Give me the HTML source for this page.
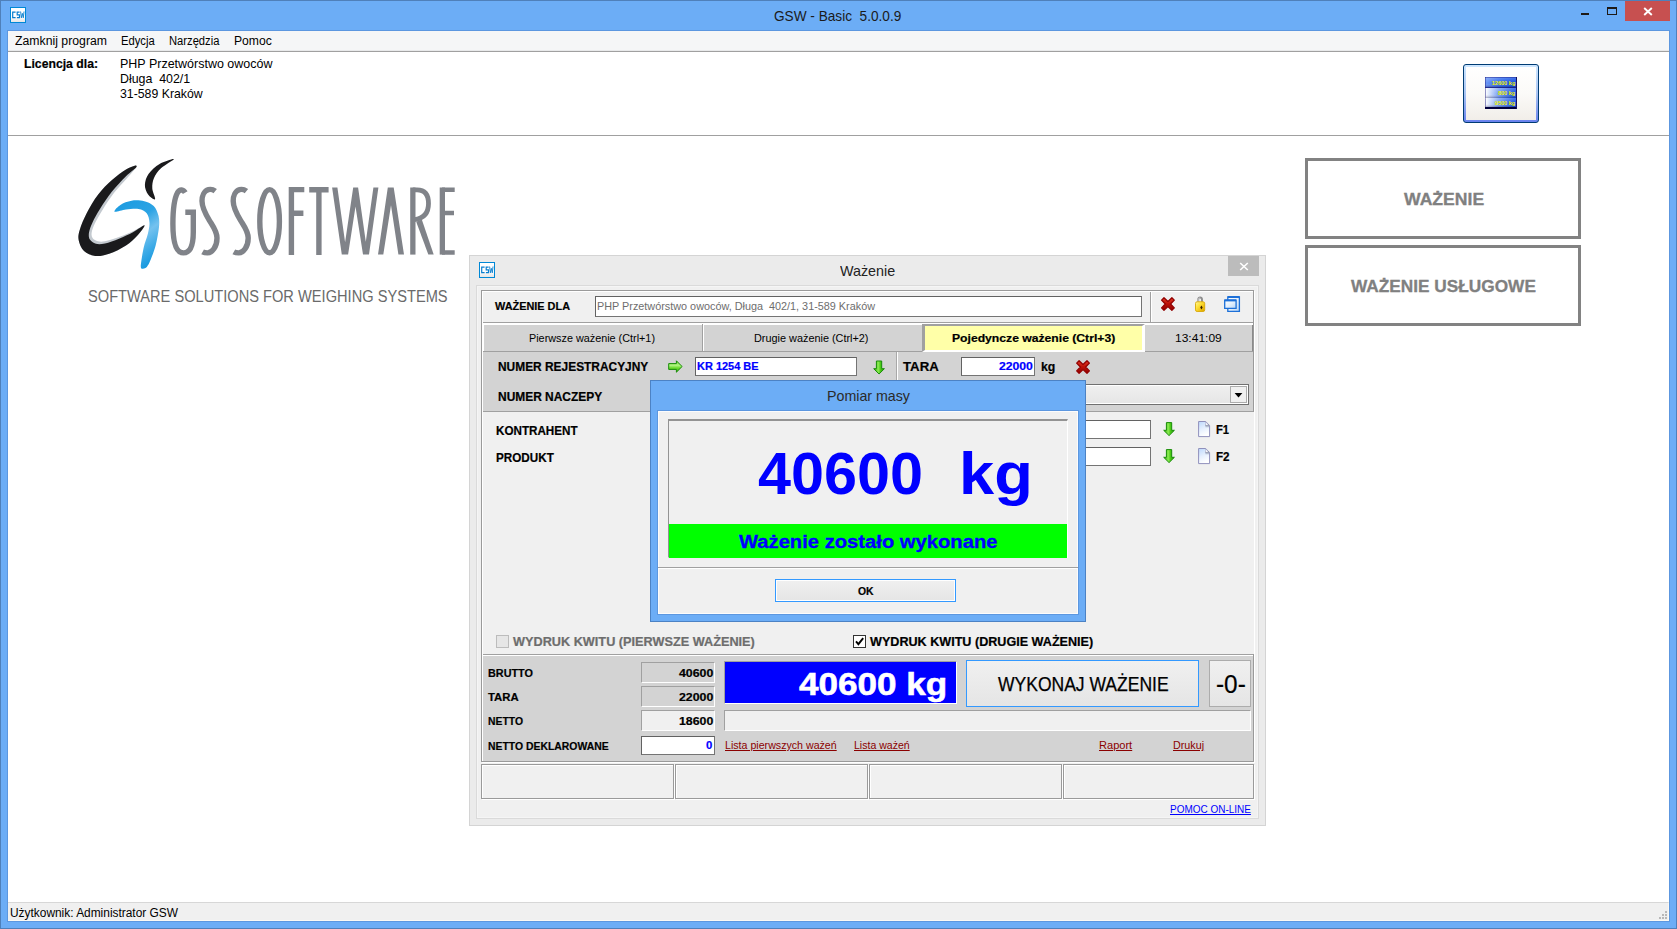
<!DOCTYPE html>
<html>
<head>
<meta charset="utf-8">
<title>GSW - Basic 5.0.0.9</title>
<style>
html,body{margin:0;padding:0;}
body{width:1677px;height:929px;overflow:hidden;position:relative;background:#6cadf6;font-family:"Liberation Sans",sans-serif;}
div,span.t,svg{position:absolute;box-sizing:border-box;}
span.t{white-space:pre;transform-origin:0 50%;display:block;}
.sunk{border:1px solid;border-color:#a0a0a0 #fff #fff #a0a0a0;}
.inp{background:#fff;border:1px solid;border-color:#626262 #747474 #747474 #626262;}
.btn{border:1px solid #acacac;background:linear-gradient(#f0f0f0,#e5e5e5);}
.btnf{border:1px solid #3399ff;background:linear-gradient(#f0f0f0,#e5e5e5);}
.etch{border:1px solid #a0a0a0;box-shadow:inset 1px 1px 0 #fff, 1px 1px 0 #fff;}
</style>
</head>
<body>
<div style="left:0px;top:0px;width:1677px;height:929px;border:1px solid #4f80ba;"></div>
<div style="left:7px;top:30px;width:1663px;height:892px;border:1px solid #5c97e0;"></div>
<div style="left:8px;top:31px;width:1661px;height:890px;background:#fff;"></div>
<div style="left:8px;top:31px;width:1661px;height:21px;background:#f5f6f7;border-bottom:1px solid #a0a0a0;"></div>
<div style="left:8px;top:50px;width:1661px;height:1px;background:#e8e9ea;"></div>
<span class="t" id="t0" style="left:774.30px;top:8.00px;font-size:15px;line-height:15px;color:#1b1b1b;transform:scale(0.9090,1);transform-origin:0 13px;">GSW - Basic &nbsp;5.0.0.9</span>
<svg style="left:10px;top:7px" width="16" height="16" viewBox="0 0 16 16"><defs><linearGradient id="ig1" x1="0" y1="0" x2="0" y2="1"><stop offset="0" stop-color="#fff"/><stop offset="0.6" stop-color="#fdfdfd"/><stop offset="1" stop-color="#e4e4e4"/></linearGradient></defs><rect x="0.5" y="0.5" width="15" height="15" fill="url(#ig1)" stroke="#0088d6"/><g fill="none" stroke="#0a7fcf" stroke-width="1.2"><path d="M5.6 5.1H2.7V10.6H5.6"/><path d="M9.6 5.1H7.2V7.8H9.5V10.6H6.9"/><path d="M10.6 4.5L11.4 10.8L12.4 6.4L13.3 10.8L14 4.5" stroke-width="0.9"/></g></svg>
<div style="left:1581px;top:13px;width:8px;height:2px;background:#1e1a16;"></div>
<div style="left:1607px;top:7px;width:10px;height:8px;border:1px solid #1e1a16;border-top-width:2px;"></div>
<div style="left:1625px;top:1px;width:45px;height:20px;background:#c75050;"></div>
<svg style="left:1643px;top:7px" width="10" height="9" viewBox="0 0 10 9"><path d="M1.2 1L8.8 8M8.8 1L1.2 8" stroke="#fff" stroke-width="1.9" fill="none"/></svg>
<span class="t" id="t1" style="left:15.00px;top:35.00px;font-size:12px;line-height:12px;color:#000;transform:scale(1.0219,1);transform-origin:0 10px;">Zamknij program</span>
<span class="t" id="t2" style="left:120.90px;top:35.00px;font-size:12px;line-height:12px;color:#000;transform:scale(0.9353,1);transform-origin:0 10px;">Edycja</span>
<span class="t" id="t3" style="left:169.30px;top:35.00px;font-size:12px;line-height:12px;color:#000;transform:scale(0.9328,1);transform-origin:0 10px;">Narzędzia</span>
<span class="t" id="t4" style="left:234.00px;top:35.00px;font-size:12px;line-height:12px;color:#000;transform:scale(1.0118,1);transform-origin:0 10px;">Pomoc</span>
<span class="t" id="t5" style="left:24.00px;top:57.00px;font-size:13px;line-height:13px;color:#000;font-weight:bold;-webkit-text-stroke:0.20px;transform:scale(0.9397,1);transform-origin:0 11px;">Licencja dla:</span>
<span class="t" id="t6" style="left:120.00px;top:57.00px;font-size:13px;line-height:13px;color:#000;transform:scale(0.9608,1);transform-origin:0 11px;">PHP Przetwórstwo owoców</span>
<span class="t" id="t7" style="left:120.00px;top:72.00px;font-size:13px;line-height:13px;color:#000;transform:scale(0.9521,1);transform-origin:0 11px;">Długa &nbsp;402/1</span>
<span class="t" id="t8" style="left:120.00px;top:87.00px;font-size:13px;line-height:13px;color:#000;transform:scale(0.9456,1);transform-origin:0 11px;">31-589 Kraków</span>
<div style="left:8px;top:135px;width:1661px;height:1px;background:#a0a0a0;"></div>
<div style="left:8px;top:902px;width:1661px;height:19px;background:#f0f0f0;border-top:1px solid #d7d7d7;border-right:1px solid #fbf9f4;border-bottom:1px solid #fbf9f4;"></div>
<span class="t" id="t9" style="left:10.00px;top:907.00px;font-size:12px;line-height:12px;color:#000;transform:scale(0.9919,1);transform-origin:0 10px;">Użytkownik: Administrator GSW</span>
<div style="left:1665px;top:911px;width:2px;height:2px;background:#b8b8b8;"></div>
<div style="left:1662px;top:914px;width:2px;height:2px;background:#b8b8b8;"></div>
<div style="left:1665px;top:914px;width:2px;height:2px;background:#b8b8b8;"></div>
<div style="left:1659px;top:917px;width:2px;height:2px;background:#b8b8b8;"></div>
<div style="left:1662px;top:917px;width:2px;height:2px;background:#b8b8b8;"></div>
<div style="left:1665px;top:917px;width:2px;height:2px;background:#b8b8b8;"></div>
<svg style="left:70px;top:150px" width="400" height="130" viewBox="70 150 400 130">
<defs>
<linearGradient id="lb" x1="0.1" y1="0" x2="0.6" y2="1"><stop offset="0" stop-color="#1c9be0"/><stop offset="0.4" stop-color="#2ba3e4"/><stop offset="0.62" stop-color="#74c2ef"/><stop offset="0.85" stop-color="#3aa9e6"/><stop offset="1" stop-color="#1c9be0"/></linearGradient>
</defs>
<path d="M134.7 165.7 C133.0 166.0 129.8 167.2 126.0 169.6 C122.2 172.0 116.7 175.9 112.0 180.1 C107.3 184.3 102.2 189.3 98.0 194.8 C93.8 200.3 89.8 207.1 86.8 213.0 C83.8 218.8 81.1 225.2 79.8 229.8 C78.4 234.3 78.0 236.7 78.7 240.3 C79.4 243.8 81.2 248.4 84.0 251.0 C86.7 253.7 91.0 255.5 95.2 255.9 C99.4 256.4 104.1 255.6 109.2 253.8 C114.3 252.1 121.3 248.5 126.0 245.5 C130.6 242.4 134.1 239.0 137.2 235.7 C140.3 232.3 145.2 226.0 144.5 225.3 C143.8 224.6 137.2 229.2 133.0 231.2 C128.7 233.1 123.7 235.4 119.0 237.1 C114.3 238.7 108.5 240.6 105.0 241.3 C101.5 242.0 100.0 241.8 98.0 241.3 C95.9 240.7 93.7 239.6 92.7 238.2 C91.6 236.7 91.3 235.0 91.7 232.6 C92.1 230.1 93.1 227.1 94.9 223.3 C96.7 219.6 99.3 214.9 102.5 209.9 C105.6 204.9 109.8 198.5 113.9 193.1 C118.1 187.7 123.7 182.0 127.4 177.7 C131.1 173.4 134.8 169.4 136.1 167.4 C137.3 165.3 136.3 165.3 134.7 165.7Z" fill="#c3c9cf"/>
<path d="M134.7 165.7 C133.0 166.0 129.8 167.2 126.0 169.6 C122.2 172.0 116.7 175.9 112.0 180.1 C107.3 184.3 102.2 189.3 98.0 194.8 C93.8 200.3 89.8 207.1 86.8 213.0 C83.8 218.8 81.1 225.2 79.8 229.8 C78.4 234.3 78.0 236.7 78.7 240.3 C79.4 243.8 81.2 248.4 84.0 251.0 C86.7 253.7 91.0 255.5 95.2 255.9 C99.4 256.4 104.1 255.6 109.2 253.8 C114.3 252.1 121.3 248.5 126.0 245.5 C130.6 242.4 134.1 239.0 137.2 235.7 C140.3 232.3 145.2 225.9 144.5 225.3 C143.8 224.7 137.2 229.9 133.0 232.2 C128.7 234.4 123.7 236.8 119.0 238.7 C114.3 240.6 108.8 242.7 105.0 243.5 C101.1 244.3 98.4 244.4 95.9 243.8 C93.4 243.1 91.0 241.4 89.9 239.6 C88.7 237.7 88.6 235.4 89.0 232.6 C89.5 229.8 90.6 226.7 92.4 222.8 C94.2 218.8 96.8 214.0 100.1 208.8 C103.4 203.6 107.7 197.0 112.0 191.6 C116.3 186.1 122.0 180.2 126.0 176.2 C130.0 172.1 134.6 169.1 136.1 167.4 C137.5 165.6 136.3 165.3 134.7 165.7Z" fill="#1a1a1c"/>
<path d="M173.8 159.2 C173.6 158.5 163.8 161.6 159.6 164.0 C155.4 166.4 151.1 170.3 148.7 173.8 C146.2 177.3 145.0 181.5 144.9 185.0 C144.8 188.4 146.4 192.1 148.1 194.5 C149.8 196.9 154.4 200.3 155.1 199.3 C155.8 198.3 152.5 192.0 152.3 188.5 C152.1 184.9 152.5 181.4 154.0 178.0 C155.4 174.6 157.7 171.3 161.0 168.2 C164.3 165.1 174.1 159.9 173.8 159.2Z" fill="#1a1a1c"/>
<path d="M114.5 211.7 C113.6 210.9 117.5 206.7 120.4 204.9 C123.2 203.0 127.6 201.3 131.6 200.7 C135.5 200.1 140.5 200.3 144.2 201.2 C147.9 202.1 151.3 203.6 153.7 206.0 C156.1 208.4 157.6 212.3 158.5 215.8 C159.3 219.3 159.5 222.1 159.0 227.0 C158.5 231.9 157.1 239.6 155.7 245.2 C154.2 250.8 151.8 257.0 150.3 260.6 C148.9 264.2 148.0 265.4 147.0 266.7 C145.9 268.0 144.9 268.5 143.9 268.4 C142.9 268.4 140.9 269.9 140.8 266.4 C140.8 263.0 142.5 253.4 143.6 248.0 C144.8 242.6 146.8 238.2 147.8 234.0 C148.8 229.8 149.7 226.2 149.5 222.8 C149.3 219.3 148.5 215.5 146.7 213.3 C144.9 211.0 142.0 209.7 138.6 209.1 C135.1 208.5 130.0 209.2 126.0 209.6 C122.0 210.1 115.4 212.5 114.5 211.7Z" fill="url(#lb)"/>
<g fill="none" stroke="#808389" stroke-width="5.4" stroke-linejoin="miter">
<path d="M185.2 192.6 C183.5 189.6 180 188.6 177.6 192.5 C174 199 172.9 210 172.9 224 C172.9 240 175.5 252.9 183.4 252.9 C191 252.9 193.3 244 193.3 232 V212.3 H185.3"/>
<path id="sS" d="M215.2 191.2 C213 189.4 210 189.2 208.4 189.6 C204 190.8 202 196 202 201 C202 208 205.5 214 209.5 220.6 C213.5 227 217 231.5 217 238 C217 247 212 252.9 207.5 252.9 C205.5 252.9 204 252.6 202.6 251.8"/>
<path transform="translate(31.2 0)" d="M215.2 191.2 C213 189.4 210 189.2 208.4 189.6 C204 190.8 202 196 202 201 C202 208 205.5 214 209.5 220.6 C213.5 227 217 231.5 217 238 C217 247 212 252.9 207.5 252.9 C205.5 252.9 204 252.6 202.6 251.8"/>
<ellipse cx="269.6" cy="221.2" rx="9.8" ry="31.6"/>
<path d="M291.4 255 V189.6 H304.3 M291.4 213.2 H303.4"/>
<path d="M309.2 189.8 H328.6 M318.9 189.8 V255"/>
<path d="M412.85 254.6 V187.5" stroke-width="5.3"/>
<path d="M412.8 189.8 H417 C425.6 189.8 428.5 195.5 428.5 203.5 C428.5 213 424.5 218.4 414.5 219.6" stroke-width="4.8"/>
<path d="M442.35 187.5 V254.6" stroke-width="5.3"/>
<path d="M442 189.7 H454.7 M442 213 H454 M442 252.4 H454.7" stroke-width="4.5"/>
</g>
<g fill="#808389">
<path d="M332.1 187.5 L337.4 187.5 L345.1 242.2 L353.2 187.5 L358.1 187.5 L365.8 241.8 L373.4 187.5 L378.4 187.5 L369 254.6 L363 254.6 L355.5 206.5 L348.1 254.6 L341.8 254.6 Z"/>
<path d="M387.8 187.5 L393.7 187.5 L404 254.6 L398.4 254.6 L391 205.2 L383.3 254.6 L378 254.6 Z"/>
<path d="M416.2 221.8 L421.8 219.6 L433.7 254.6 L428.3 254.6 Z"/>
</g>
</svg>
<span class="t" id="t10" style="left:87.80px;top:289.00px;font-size:16px;line-height:16px;color:#6a6a6a;transform:scale(0.9145,1);transform-origin:0 13px;">SOFTWARE SOLUTIONS FOR WEIGHING SYSTEMS</span>
<div style="left:1463px;top:64px;width:76px;height:59px;border:1px solid #003c74;border-radius:3px;background:linear-gradient(#cee7ff,#a9c4f2 50%,#6982ee);"></div>
<div style="left:1466px;top:67px;width:70px;height:53px;background:linear-gradient(#ffffff 0%,#fbfaf8 50%,#f1eee9 100%);"></div>
<svg style="left:1485px;top:77px" width="32" height="32" viewBox="0 0 32 32"><defs>
<linearGradient id="sg1" x1="0" y1="0" x2="1" y2="0"><stop offset="0" stop-color="#6b95f4"/><stop offset="0.5" stop-color="#2a66ee"/><stop offset="1" stop-color="#0a48e0"/></linearGradient>
<linearGradient id="sg2" x1="0" y1="0" x2="1" y2="0"><stop offset="0" stop-color="#ffffff"/><stop offset="0.45" stop-color="#6f9af4"/><stop offset="1" stop-color="#0a48e0"/></linearGradient>
<linearGradient id="sgv" x1="0" y1="0" x2="0" y2="1"><stop offset="0" stop-color="#fff" stop-opacity="0.25"/><stop offset="0.6" stop-color="#fff" stop-opacity="0"/><stop offset="1" stop-color="#000040" stop-opacity="0.35"/></linearGradient></defs>
<rect x="0" y="0" width="32" height="32" fill="#1a1a80"/>
<rect x="0.5" y="0.5" width="30.5" height="9.7" fill="url(#sg1)"/><rect x="0.5" y="11" width="30.5" height="10.2" fill="url(#sg2)"/><rect x="0.5" y="21" width="30.5" height="9.2" fill="url(#sg2)"/>
<rect x="0.5" y="0.5" width="30.5" height="9.7" fill="url(#sgv)"/><rect x="0.5" y="11" width="30.5" height="10" fill="url(#sgv)"/><rect x="0.5" y="21" width="30.5" height="9.2" fill="url(#sgv)"/>
<rect x="0" y="30" width="32" height="2" fill="#00003c"/><rect x="31" y="0" width="1" height="32" fill="#101060"/>
<g fill="#f2f200" font-family="Liberation Sans, sans-serif" font-weight="bold" font-size="5.6" text-anchor="end"><text x="30.3" y="7.8">12600 kg</text><text x="30.3" y="18">800 kg</text><text x="30.3" y="28.2">9500 kg</text></g></svg>
<div style="left:1305px;top:158px;width:276px;height:81px;border:3px solid #828282;background:#fff;"></div>
<span class="t" id="t11" style="left:1403.60px;top:191.00px;font-size:17.33px;line-height:17.33px;color:#808080;font-weight:bold;-webkit-text-stroke:0.31px;transform:scale(1.0158,1);transform-origin:0 14px;">WAŻENIE</span>
<div style="left:1305px;top:245px;width:276px;height:81px;border:3px solid #828282;background:#fff;"></div>
<span class="t" id="t12" style="left:1350.50px;top:278.00px;font-size:17.33px;line-height:17.33px;color:#808080;font-weight:bold;-webkit-text-stroke:0.31px;transform:scale(0.9952,1);transform-origin:0 14px;">WAŻENIE USŁUGOWE</span>
<div style="left:469px;top:255px;width:797px;height:571px;background:#ebebeb;border:1px solid #d4d4d4;"></div>
<div style="left:476px;top:285px;width:783px;height:534px;background:#f0f0f0;border:1px solid #dadada;box-shadow:inset 0 0 0 1px #f5f5f5;"></div>
<svg style="left:479px;top:262px" width="16" height="16" viewBox="0 0 16 16"><defs><linearGradient id="ig2" x1="0" y1="0" x2="0" y2="1"><stop offset="0" stop-color="#fff"/><stop offset="0.6" stop-color="#fdfdfd"/><stop offset="1" stop-color="#e4e4e4"/></linearGradient></defs><rect x="0.5" y="0.5" width="15" height="15" fill="url(#ig2)" stroke="#0088d6"/><g fill="none" stroke="#0a7fcf" stroke-width="1.2"><path d="M5.6 5.1H2.7V10.6H5.6"/><path d="M9.6 5.1H7.2V7.8H9.5V10.6H6.9"/><path d="M10.6 4.5L11.4 10.8L12.4 6.4L13.3 10.8L14 4.5" stroke-width="0.9"/></g></svg>
<span class="t" id="t13" style="left:839.50px;top:263.00px;font-size:15px;line-height:15px;color:#222;transform:scale(0.9548,1);transform-origin:0 13px;">Ważenie</span>
<div style="left:1228px;top:256px;width:31px;height:20px;background:#bcbcbc;"></div>
<svg style="left:1239px;top:262px" width="10" height="9" viewBox="0 0 10 9"><path d="M1.2 1L8.8 8M8.8 1L1.2 8" stroke="#fff" stroke-width="1.6" fill="none"/></svg>
<div style="left:482px;top:291px;width:773px;height:472px;background:#f0f0f0;border:1px solid #fff;"></div>
<div style="left:481px;top:290px;width:773px;height:472px;border:1px solid #9a9a9a;"></div>
<span class="t" id="t14" style="left:495.00px;top:301.00px;font-size:11px;line-height:11px;color:#000;font-weight:bold;-webkit-text-stroke:0.20px;transform:scale(0.9897,1);transform-origin:0 9px;">WAŻENIE DLA</span>
<div class="inp" style="left:595px;top:296px;width:547px;height:21px;"></div>
<span class="t" id="t15" style="left:597.20px;top:301.00px;font-size:11px;line-height:11px;color:#6d6d6d;transform:scale(0.9848,1);transform-origin:0 9px;">PHP Przetwórstwo owoców, Długa &nbsp;402/1, 31-589 Kraków</span>
<svg style="left:1160px;top:296px" width="16" height="16" viewBox="0 0 16 16"><defs><linearGradient id="rx0" x1="0" y1="0" x2="0" y2="1"><stop offset="0" stop-color="#e23c28"/><stop offset="0.45" stop-color="#c0140a"/><stop offset="1" stop-color="#920000"/></linearGradient></defs><path transform="translate(0.7 0.9) scale(0.965 0.95)" d="M3.4 0.9L7.5 4.8L11.6 0.9L14.1 3.4L10.2 7.5L14.1 11.6L11.6 14.1L7.5 10.2L3.4 14.1L0.9 11.6L4.8 7.5L0.9 3.4Z" fill="url(#rx0)" stroke="#920000" stroke-width="1.3" stroke-linejoin="round"/></svg>
<svg style="left:1194px;top:296px" width="13" height="17" viewBox="0 0 13 17"><defs><linearGradient id="lk" x1="0" y1="0" x2="1" y2="1"><stop offset="0" stop-color="#fff6a0"/><stop offset="0.35" stop-color="#ffe440"/><stop offset="0.7" stop-color="#f0c010"/><stop offset="1" stop-color="#d8a000"/></linearGradient></defs>
<path d="M4.2 7.6V3.6C4.2 2.1 5.1 1.5 6.1 1.5C7.1 1.5 8 2.1 8 3.6V7.6" fill="none" stroke="#8e8e8e" stroke-width="1.9"/>
<path d="M4.2 7.6V3.8C4.2 2.5 5.2 2 6.1 2" fill="none" stroke="#dcdcdc" stroke-width="0.8"/>
<rect x="1.5" y="5.8" width="9.2" height="9.7" rx="1.6" fill="url(#lk)" stroke="#d8a808" stroke-width="0.9"/>
<path d="M7.4 9.6L8.7 11.6L7.4 13.5L6.2 11.6Z" fill="#3a2400"/></svg>
<svg style="left:1223px;top:295px" width="18" height="18" viewBox="0 0 18 18"><defs><linearGradient id="wn" x1="0" y1="0" x2="1" y2="1"><stop offset="0" stop-color="#fff"/><stop offset="0.5" stop-color="#e4f0fc"/><stop offset="1" stop-color="#b8d6f6"/></linearGradient></defs>
<path d="M4.8 1.9H16.4V16.3H4.8Z" fill="url(#wn)" stroke="#1d70d8" stroke-width="1.3"/><path d="M4.8 2H16.4" stroke="#1d70d8" stroke-width="2"/>
<path d="M1.7 5.2H13.1V13.4H1.7Z" fill="url(#wn)" stroke="#1d70d8" stroke-width="1.3"/><path d="M1.7 5.4H13.1" stroke="#1d70d8" stroke-width="2"/></svg>
<div style="left:1150px;top:292px;width:1px;height:30px;background:#a0a0a0;"></div>
<div style="left:1151px;top:292px;width:1px;height:30px;background:#fff;"></div>
<div style="left:483px;top:322px;width:770px;height:1px;background:#a0a0a0;"></div>
<div style="left:483px;top:323px;width:770px;height:2px;background:#fff;"></div>
<div style="left:484px;top:325px;width:769px;height:26px;background:#d3d3d3;"></div>
<div style="left:483px;top:325px;width:1px;height:26px;background:#fff;"></div>
<div style="left:1252px;top:325px;width:1px;height:26px;background:#8a8a8a;"></div>
<div style="left:483px;top:351px;width:770px;height:1px;background:#a0a0a0;"></div>
<div style="left:702px;top:324px;width:1px;height:27px;background:#a0a0a0;"></div>
<div style="left:703px;top:325px;width:1px;height:26px;background:#fff;"></div>
<span class="t" id="t16" style="left:529.10px;top:333.00px;font-size:11px;line-height:11px;color:#000;transform:scale(0.9838,1);transform-origin:0 9px;">Pierwsze ważenie (Ctrl+1)</span>
<span class="t" id="t17" style="left:754.40px;top:333.00px;font-size:11px;line-height:11px;color:#000;transform:scale(0.9883,1);transform-origin:0 9px;">Drugie ważenie (Ctrl+2)</span>
<div style="left:922px;top:324px;width:223px;height:28px;background:#ffffa8;border:solid;border-width:2px 3px 2px 3px;border-color:#a0a0a0 #fff #fff #a0a0a0;"></div>
<span class="t" id="t18" style="left:951.80px;top:333.00px;font-size:11px;line-height:11px;color:#000;font-weight:bold;-webkit-text-stroke:0.20px;transform:scale(1.1054,1);transform-origin:0 9px;">Pojedyncze ważenie (Ctrl+3)</span>
<span class="t" id="t19" style="left:1174.70px;top:333.00px;font-size:11px;line-height:11px;color:#000;transform:scale(1.0927,1);transform-origin:0 9px;">13:41:09</span>
<div style="left:483px;top:352px;width:770px;height:59px;background:#d3d3d3;"></div>
<div style="left:483px;top:411px;width:770px;height:1px;background:#a0a0a0;"></div>
<span class="t" id="t20" style="left:497.60px;top:361.00px;font-size:12px;line-height:12px;color:#000;font-weight:bold;-webkit-text-stroke:0.20px;transform:scale(0.9930,1);transform-origin:0 10px;">NUMER REJESTRACYJNY</span>
<span class="t" id="t21" style="left:497.60px;top:391.00px;font-size:12px;line-height:12px;color:#000;font-weight:bold;-webkit-text-stroke:0.20px;transform:scale(0.9955,1);transform-origin:0 10px;">NUMER NACZEPY</span>
<svg style="left:667.5px;top:359.8px" width="15" height="13" viewBox="0 0 15 13"><defs><linearGradient id="ar1" x1="0" y1="0" x2="0" y2="1"><stop offset="0.1" stop-color="#84dc48"/><stop offset="0.4" stop-color="#b0f480"/><stop offset="0.62" stop-color="#6cdc30"/><stop offset="0.95" stop-color="#38b010"/></linearGradient></defs><path d="M0.7 3.6H8.4V0.8L14.1 6.5L8.4 12.2V9.4H0.7Z" fill="url(#ar1)" stroke="#188c08" stroke-width="1" stroke-linejoin="round"/></svg>
<div class="inp" style="left:695px;top:357px;width:162px;height:19px;"></div>
<span class="t" id="t22" style="left:697.40px;top:361.00px;font-size:11px;line-height:11px;color:#0000ff;font-weight:bold;-webkit-text-stroke:0.20px;transform:scale(0.9973,1);transform-origin:0 9px;">KR 1254 BE</span>
<svg style="left:873px;top:360px" width="14" height="16" viewBox="0 0 14 16"><defs><linearGradient id="ad1" x1="0" y1="0" x2="1" y2="0"><stop offset="0.1" stop-color="#3cb410"/><stop offset="0.42" stop-color="#8eec54"/><stop offset="0.62" stop-color="#4ccc18"/><stop offset="0.95" stop-color="#2a9c08"/></linearGradient></defs><path transform="translate(0 0.4)" d="M3.4 0.6V8.3H0.7L6.05 13.6L11.4 8.3H8.7V0.6Z" fill="url(#ad1)" stroke="#188c08" stroke-width="1" stroke-linejoin="round"/></svg>
<div style="left:896px;top:352px;width:1px;height:59px;background:#a8a8a8;"></div>
<div style="left:897px;top:352px;width:1px;height:59px;background:#fff;"></div>
<span class="t" id="t23" style="left:903.20px;top:361.00px;font-size:12px;line-height:12px;color:#000;font-weight:bold;-webkit-text-stroke:0.20px;transform:scale(1.1006,1);transform-origin:0 10px;">TARA</span>
<div class="inp" style="left:961px;top:357px;width:74px;height:19px;"></div>
<span class="t" id="t24" style="left:998.70px;top:361.00px;font-size:11px;line-height:11px;color:#0000ff;font-weight:bold;-webkit-text-stroke:0.20px;transform:scale(1.1081,1);transform-origin:0 9px;">22000</span>
<span class="t" id="t25" style="left:1041.00px;top:361.00px;font-size:12px;line-height:12px;color:#000;font-weight:bold;-webkit-text-stroke:0.20px;transform:scale(1.0203,1);transform-origin:0 10px;">kg</span>
<svg style="left:1075px;top:359px" width="16" height="16" viewBox="0 0 16 16"><defs><linearGradient id="rx1" x1="0" y1="0" x2="0" y2="1"><stop offset="0" stop-color="#e23c28"/><stop offset="0.45" stop-color="#c0140a"/><stop offset="1" stop-color="#920000"/></linearGradient></defs><path transform="translate(0.8 0.9) scale(0.965 0.95)" d="M3.4 0.9L7.5 4.8L11.6 0.9L14.1 3.4L10.2 7.5L14.1 11.6L11.6 14.1L7.5 10.2L3.4 14.1L0.9 11.6L4.8 7.5L0.9 3.4Z" fill="url(#rx1)" stroke="#920000" stroke-width="1.3" stroke-linejoin="round"/></svg>
<div style="left:660px;top:384px;width:589px;height:21px;background:linear-gradient(#f0f0f0,#e5e5e5);border:1px solid #707070;box-shadow:inset 0 0 0 1px #fff;"></div>
<div style="left:1230px;top:386px;width:17px;height:17px;border:1px solid #acacac;background:#f0f0f0;"></div>
<svg style="left:1234px;top:393px" width="9" height="5" viewBox="0 0 9 5"><path d="M0.6 0H8.4L4.5 4.4Z" fill="#000"/></svg>
<span class="t" id="t26" style="left:496.00px;top:425.00px;font-size:12px;line-height:12px;color:#000;font-weight:bold;-webkit-text-stroke:0.20px;transform:scale(0.9714,1);transform-origin:0 10px;">KONTRAHENT</span>
<span class="t" id="t27" style="left:496.00px;top:452.00px;font-size:12px;line-height:12px;color:#000;font-weight:bold;-webkit-text-stroke:0.20px;transform:scale(0.9740,1);transform-origin:0 10px;">PRODUKT</span>
<div class="inp" style="left:660px;top:420px;width:491px;height:19px;"></div>
<div class="inp" style="left:660px;top:447px;width:491px;height:19px;"></div>
<svg style="left:1163px;top:422px" width="14" height="16" viewBox="0 0 14 16"><defs><linearGradient id="ad2" x1="0" y1="0" x2="1" y2="0"><stop offset="0.1" stop-color="#3cb410"/><stop offset="0.42" stop-color="#8eec54"/><stop offset="0.62" stop-color="#4ccc18"/><stop offset="0.95" stop-color="#2a9c08"/></linearGradient></defs><path transform="translate(0 0)" d="M3.4 0.6V8.3H0.7L6.05 13.6L11.4 8.3H8.7V0.6Z" fill="url(#ad2)" stroke="#188c08" stroke-width="1" stroke-linejoin="round"/></svg>
<svg style="left:1163px;top:449px" width="14" height="16" viewBox="0 0 14 16"><defs><linearGradient id="ad3" x1="0" y1="0" x2="1" y2="0"><stop offset="0.1" stop-color="#3cb410"/><stop offset="0.42" stop-color="#8eec54"/><stop offset="0.62" stop-color="#4ccc18"/><stop offset="0.95" stop-color="#2a9c08"/></linearGradient></defs><path transform="translate(0 0)" d="M3.4 0.6V8.3H0.7L6.05 13.6L11.4 8.3H8.7V0.6Z" fill="url(#ad3)" stroke="#188c08" stroke-width="1" stroke-linejoin="round"/></svg>
<svg style="left:1198px;top:421px" width="13" height="17" viewBox="0 0 13 17"><defs><linearGradient id="dc1" x1="0" y1="0" x2="0.35" y2="1"><stop offset="0" stop-color="#bcd8fc"/><stop offset="0.55" stop-color="#e6f0fe"/><stop offset="1" stop-color="#ffffff"/></linearGradient><linearGradient id="ds1" x1="0" y1="0" x2="0" y2="1"><stop offset="0" stop-color="#4c5468"/><stop offset="1" stop-color="#9aa6bc" stop-opacity="0"/></linearGradient></defs><path d="M0.6 0.5H7.7L11.6 4.6V15.6H0.6Z" fill="url(#dc1)" stroke="#9090bc" stroke-width="1"/><path d="M7.4 3.6H11.1V7H7.4Z" fill="url(#ds1)"/><path d="M7.5 0.9V4.3H10.9Z" fill="#fff" stroke="#a0a4c4" stroke-width="0.5"/></svg>
<svg style="left:1198px;top:448px" width="13" height="17" viewBox="0 0 13 17"><defs><linearGradient id="dc2" x1="0" y1="0" x2="0.35" y2="1"><stop offset="0" stop-color="#bcd8fc"/><stop offset="0.55" stop-color="#e6f0fe"/><stop offset="1" stop-color="#ffffff"/></linearGradient><linearGradient id="ds2" x1="0" y1="0" x2="0" y2="1"><stop offset="0" stop-color="#4c5468"/><stop offset="1" stop-color="#9aa6bc" stop-opacity="0"/></linearGradient></defs><path d="M0.6 0.5H7.7L11.6 4.6V15.6H0.6Z" fill="url(#dc2)" stroke="#9090bc" stroke-width="1"/><path d="M7.4 3.6H11.1V7H7.4Z" fill="url(#ds2)"/><path d="M7.5 0.9V4.3H10.9Z" fill="#fff" stroke="#a0a4c4" stroke-width="0.5"/></svg>
<span class="t" id="t28" style="left:1216.10px;top:424.00px;font-size:12px;line-height:12px;color:#000;font-weight:bold;-webkit-text-stroke:0.20px;transform:scale(0.9347,1);transform-origin:0 10px;">F1</span>
<span class="t" id="t29" style="left:1216.10px;top:451.00px;font-size:12px;line-height:12px;color:#000;font-weight:bold;-webkit-text-stroke:0.20px;transform:scale(0.9703,1);transform-origin:0 10px;">F2</span>
<div style="left:1253px;top:412px;width:1px;height:242px;background:#f0f0f0;"></div>
<div style="left:496px;top:635px;width:13px;height:13px;border:1px solid #bcbcbc;background:#e6e6e6;"></div>
<span class="t" id="t30" style="left:513.40px;top:636.00px;font-size:12px;line-height:12px;color:#6d6d6d;font-weight:bold;-webkit-text-stroke:0.20px;transform:scale(1.0585,1);transform-origin:0 10px;">WYDRUK KWITU (PIERWSZE WAŻENIE)</span>
<div style="left:853px;top:635px;width:13px;height:13px;border:1px solid #333;background:#fff;"></div>
<svg style="left:853px;top:635px" width="13" height="13" viewBox="0 0 13 13"><path d="M3 6.4L5.4 9.2L10.2 3.2" fill="none" stroke="#000" stroke-width="1.9"/></svg>
<span class="t" id="t31" style="left:870.30px;top:636.00px;font-size:12px;line-height:12px;color:#000;font-weight:bold;-webkit-text-stroke:0.20px;transform:scale(1.0496,1);transform-origin:0 10px;">WYDRUK KWITU (DRUGIE WAŻENIE)</span>
<div style="left:483px;top:654px;width:770px;height:1px;background:#a0a0a0;"></div>
<div style="left:483px;top:655px;width:770px;height:1px;background:#fff;"></div>
<div style="left:483px;top:656px;width:770px;height:105px;background:#d3d3d3;"></div>
<span class="t" id="t32" style="left:488.00px;top:668.00px;font-size:11px;line-height:11px;color:#000;font-weight:bold;-webkit-text-stroke:0.20px;transform:scale(0.9838,1);transform-origin:0 9px;">BRUTTO</span>
<span class="t" id="t33" style="left:488.00px;top:692.00px;font-size:11px;line-height:11px;color:#000;font-weight:bold;-webkit-text-stroke:0.20px;transform:scale(1.0291,1);transform-origin:0 9px;">TARA</span>
<span class="t" id="t34" style="left:488.00px;top:716.00px;font-size:11px;line-height:11px;color:#000;font-weight:bold;-webkit-text-stroke:0.20px;transform:scale(0.9440,1);transform-origin:0 9px;">NETTO</span>
<span class="t" id="t35" style="left:488.00px;top:741.00px;font-size:11px;line-height:11px;color:#000;font-weight:bold;-webkit-text-stroke:0.20px;transform:scale(0.9457,1);transform-origin:0 9px;">NETTO DEKLAROWANE</span>
<div class="sunk" style="left:641px;top:662px;width:74px;height:21px;background:#d3d3d3;"></div>
<div class="sunk" style="left:641px;top:686px;width:74px;height:21px;background:#d3d3d3;"></div>
<div class="sunk" style="left:641px;top:710px;width:74px;height:21px;background:#f0f0f0;"></div>
<div class="inp" style="left:641px;top:736px;width:74px;height:19px;"></div>
<span class="t" id="t36" style="left:679.10px;top:668.00px;font-size:11px;line-height:11px;color:#000;font-weight:bold;-webkit-text-stroke:0.20px;transform:scale(1.1211,1);transform-origin:0 9px;">40600</span>
<span class="t" id="t37" style="left:679.10px;top:692.00px;font-size:11px;line-height:11px;color:#000;font-weight:bold;-webkit-text-stroke:0.20px;transform:scale(1.1211,1);transform-origin:0 9px;">22000</span>
<span class="t" id="t38" style="left:679.10px;top:716.00px;font-size:11px;line-height:11px;color:#000;font-weight:bold;-webkit-text-stroke:0.20px;transform:scale(1.1211,1);transform-origin:0 9px;">18600</span>
<span class="t" id="t39" style="left:706.40px;top:740.00px;font-size:11px;line-height:11px;color:#0000ff;font-weight:bold;-webkit-text-stroke:0.20px;transform:scale(1.0286,1);transform-origin:0 9px;">0</span>
<div class="sunk" style="left:724px;top:661px;width:233px;height:43px;background:#0000ff;"></div>
<span class="t" id="t40" style="left:799.20px;top:669.00px;font-size:31px;line-height:31px;color:#fff;font-weight:bold;-webkit-text-stroke:0.56px;transform:scale(1.1321,1);transform-origin:0 26px;">40600 kg</span>
<div class="btnf" style="left:966px;top:660px;width:233px;height:47px;"></div>
<span class="t" id="t41" style="left:997.80px;top:675.00px;font-size:19.5px;line-height:19.5px;color:#000;-webkit-text-stroke:0.25px;transform:scale(0.8980,1);transform-origin:0 16px;">WYKONAJ WAŻENIE</span>
<div class="btn" style="left:1209px;top:660px;width:42px;height:47px;"></div>
<span class="t" id="t42" style="left:1215.60px;top:672.00px;font-size:25px;line-height:25px;color:#000;-webkit-text-stroke:0.20px;transform:scale(0.9751,1);transform-origin:0 21px;">-0-</span>
<div class="sunk" style="left:724px;top:710px;width:527px;height:21px;background:#f0f0f0;"></div>
<span class="t" id="t43" style="left:724.70px;top:740.00px;font-size:11px;line-height:11px;color:#8b0000;text-decoration:underline;transform:scale(0.9666,1);transform-origin:0 9px;">Lista pierwszych ważeń</span>
<span class="t" id="t44" style="left:853.90px;top:740.00px;font-size:11px;line-height:11px;color:#8b0000;text-decoration:underline;transform:scale(0.9588,1);transform-origin:0 9px;">Lista ważeń</span>
<span class="t" id="t45" style="left:1098.50px;top:740.00px;font-size:11px;line-height:11px;color:#8b0000;text-decoration:underline;transform:scale(1.0051,1);transform-origin:0 9px;">Raport</span>
<span class="t" id="t46" style="left:1172.70px;top:740.00px;font-size:11px;line-height:11px;color:#8b0000;text-decoration:underline;transform:scale(0.9781,1);transform-origin:0 9px;">Drukuj</span>
<div style="left:482px;top:765px;width:193px;height:35px;background:#f0f0f0;border:1px solid #fff;"></div>
<div style="left:481px;top:764px;width:193px;height:35px;border:1px solid #9a9a9a;"></div>
<div style="left:676px;top:765px;width:193px;height:35px;background:#f0f0f0;border:1px solid #fff;"></div>
<div style="left:675px;top:764px;width:193px;height:35px;border:1px solid #9a9a9a;"></div>
<div style="left:870px;top:765px;width:193px;height:35px;background:#f0f0f0;border:1px solid #fff;"></div>
<div style="left:869px;top:764px;width:193px;height:35px;border:1px solid #9a9a9a;"></div>
<div style="left:1064px;top:765px;width:191px;height:35px;background:#f0f0f0;border:1px solid #fff;"></div>
<div style="left:1063px;top:764px;width:191px;height:35px;border:1px solid #9a9a9a;"></div>
<span class="t" id="t47" style="left:1169.80px;top:804.00px;font-size:11px;line-height:11px;color:#0000ff;text-decoration:underline;transform:scale(0.9066,1);transform-origin:0 9px;">POMOC ON-LINE</span>
<div style="left:650px;top:380px;width:436px;height:242px;background:#6cadf6;border:1px solid #4c82c4;"></div>
<span class="t" id="t48" style="left:826.70px;top:388.00px;font-size:15px;line-height:15px;color:#2a2a2a;transform:scale(0.9482,1);transform-origin:0 13px;">Pomiar masy</span>
<div style="left:657px;top:410px;width:422px;height:205px;border:1px solid #5c97e0;"></div>
<div style="left:658px;top:411px;width:420px;height:203px;background:#f0f0f0;border:1px solid #fcfcfc;"></div>
<div style="left:668px;top:419px;width:400px;height:139px;background:#f0f0f0;border:solid;border-width:2px 1px 1px 1px;border-color:#939393 #fff #fff #939393;"></div>
<span class="t" id="t49" style="left:758.00px;top:445.00px;font-size:58.5px;line-height:58.5px;color:#0000ff;font-weight:bold;transform:scale(1.0142,1);transform-origin:0 49px;">40600</span>
<span class="t" id="t50" style="left:958.80px;top:445.00px;font-size:58.5px;line-height:58.5px;color:#0000ff;font-weight:bold;transform:scale(1.0808,1);transform-origin:0 49px;">kg</span>
<div style="left:669px;top:524px;width:398px;height:34px;background:#00ff00;"></div>
<span class="t" id="t51" style="left:738.50px;top:533.00px;font-size:18.67px;line-height:18.67px;color:#0000ff;font-weight:bold;-webkit-text-stroke:0.34px;transform:scale(1.0825,1);transform-origin:0 15px;">Ważenie zostało wykonane</span>
<div style="left:658px;top:567px;width:420px;height:1px;background:#a0a0a0;"></div>
<div style="left:658px;top:568px;width:420px;height:1px;background:#fff;"></div>
<div class="btnf" style="left:775px;top:579px;width:181px;height:23px;box-shadow:inset 0 0 0 1px #fff;"></div>
<span class="t" id="t52" style="left:857.60px;top:586.00px;font-size:11px;line-height:11px;color:#000;font-weight:bold;-webkit-text-stroke:0.20px;transform:scale(0.9455,1);transform-origin:0 9px;">OK</span>
</body>
</html>
